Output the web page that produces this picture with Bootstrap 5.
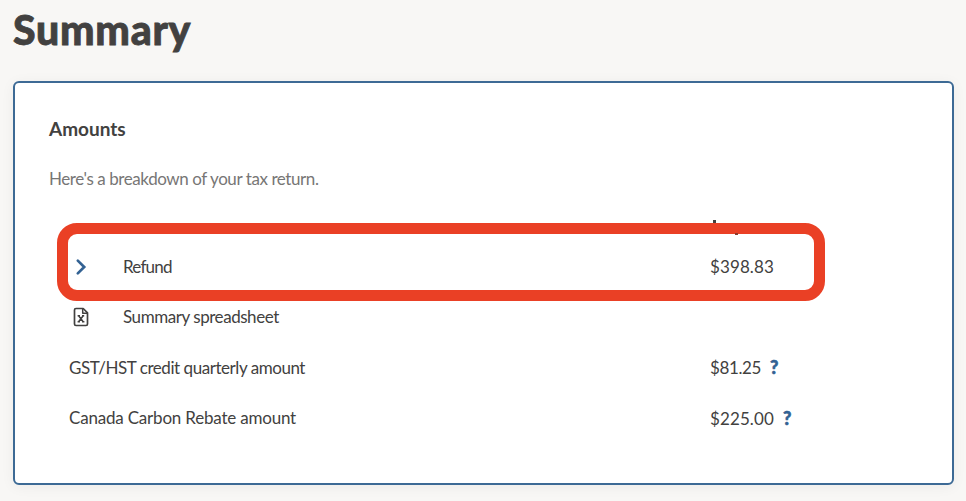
<!DOCTYPE html>
<html lang="en">
<head>
<meta charset="utf-8">
<meta name="viewport" content="width=device-width, initial-scale=1">
<title>Summary</title>
<link rel="stylesheet" href="https://cdn.jsdelivr.net/npm/bootstrap@5.3.0/dist/css/bootstrap.min.css">
<style>
body{background:#f8f7f5;color:#424140;font-family:Lato,"Liberation Sans",sans-serif;font-size:17px;line-height:24px;height:501px;overflow:hidden}
.page{padding:5px 12px 0 13px}
.title{font-size:41px;font-weight:900;line-height:50px;height:76px;margin:0;letter-spacing:.75px;-webkit-text-stroke:.8px #424140}
.panel{height:404px;border:2px solid #3d6a95;border-radius:6px;padding:34px;box-shadow:0 2px 14px rgba(0,0,0,.05)}
.panel-title{font-size:19px;font-weight:700;line-height:24px;margin:0 0 26px}
.intro{color:#777675;margin:0 0 51px;letter-spacing:-.42px}
.line{height:50.3px;letter-spacing:-.2px;padding-left:20px}
.snug{letter-spacing:-.45px}
.snugger{letter-spacing:-.8px}
.line-icon{width:54px;padding-left:4px}
.figure-col{width:208px;letter-spacing:.1px}
.figure-tight{letter-spacing:-.4px}
.help{color:#336293;font-weight:900;font-size:18px;margin-left:9px;-webkit-text-stroke:.6px #336293}
.callout{left:42px;top:140px;width:768px;height:78px;border:11px solid #ea4025;border-radius:20px}
.tick{width:3px;background:#424140}
.tick-a{left:698px;top:137px;height:3px}
.tick-b{left:720px;top:150px;height:2px;background:#8d3a2d}
</style>
<script src="https://cdn.jsdelivr.net/npm/bootstrap@5.3.0/dist/js/bootstrap.bundle.min.js"></script>
</head>
<body>
<main class="page">
  <h1 class="title">Summary</h1>
  <section class="panel bg-white position-relative">
    <h2 class="panel-title">Amounts</h2>
    <p class="intro">Here's a breakdown of your tax return.</p>
    <div class="amounts">
      <div class="line d-flex align-items-center">
        <div class="line-icon d-flex"><svg width="16" height="18" viewBox="0 0 16 18" fill="none" stroke="#336293" stroke-width="2.7" stroke-linecap="round" stroke-linejoin="miter"><path d="M4.800 2.600l6.400 6.400-6.400 6.400"/></svg></div>
        <div class="flex-grow-1 snugger">Refund</div>
        <div class="figure-col">$398.83</div>
      </div>
      <div class="line d-flex align-items-center">
        <div class="line-icon d-flex"><svg width="16" height="20" viewBox="0 0 16 20" fill="none" stroke="#424140" stroke-width="1.7" stroke-linejoin="round"><path d="M3 1.500h7.200l4.300 4.300V17q0 1.500-1.500 1.500H3Q1.500 18.500 1.500 17V3Q1.500 1.500 3 1.500z"/><path d="M9.700 1.800v4.500h4.500" stroke-width="1.500"/><path d="M5.600 8.700l4.600 6M10.200 8.700l-4.600 6M4.600 8.700h2.400M9 8.700h2.200M4.600 14.700h2.400M9 14.700h2.400" stroke-width="1.500"/></svg></div>
        <div class="flex-grow-1 snug">Summary spreadsheet</div>
      </div>
      <div class="line d-flex align-items-center">
        <div class="flex-grow-1 snug">GST/HST credit quarterly amount</div>
        <div class="figure-col"><span class="figure-tight">$81.25</span><span class="help">?</span></div>
      </div>
      <div class="line d-flex align-items-center">
        <div class="flex-grow-1">Canada Carbon Rebate amount</div>
        <div class="figure-col">$225.00<span class="help">?</span></div>
      </div>
    </div>
    <div class="tick tick-a position-absolute"></div>
    <div class="callout position-absolute"></div>
    <div class="tick tick-b position-absolute"></div>
  </section>
</main>
</body>
</html>
